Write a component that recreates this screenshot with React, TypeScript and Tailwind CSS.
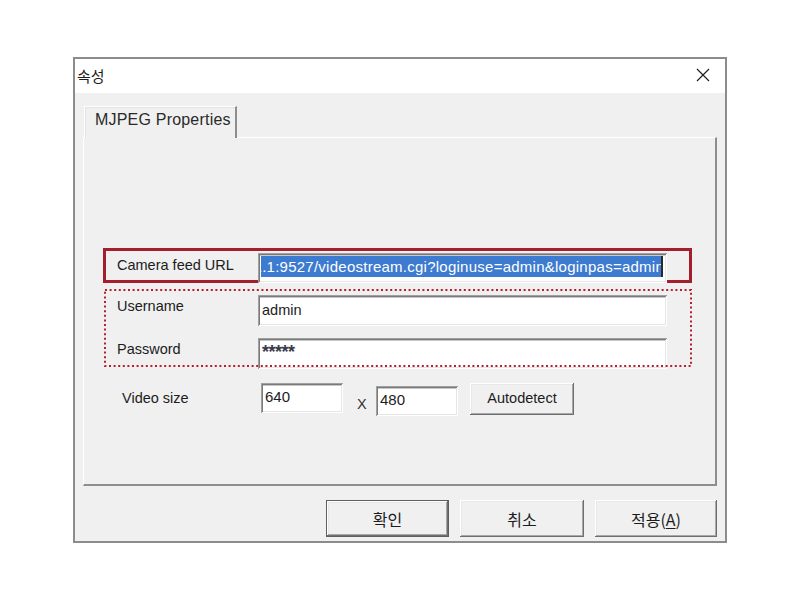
const ui = { fontFamily: '"Liberation Sans", "Noto Sans CJK KR", sans-serif' };
const kr = { fontFamily: '"Noto Sans CJK KR", "Liberation Sans", sans-serif' };

// sunken 3d edit box
const editBox =
  "bg-white shadow-[inset_1px_1px_#a0a0a0,inset_-1px_-1px_#ffffff,inset_2px_2px_#7a7a7a,inset_-2px_-2px_#e6e6e6,inset_0_3px_#c8c8c8]";
// raised push button
const pushBtn =
  "bg-[#f0f0f0] shadow-[inset_-1px_-1px_#6e6e6e,inset_1px_1px_#ffffff,inset_-2px_-2px_#a8a8a8,inset_2px_2px_#e8e8e8]";

function CloseIcon() {
  return (
    <svg width="14" height="14" viewBox="0 0 14 14">
      <path d="M1 1 L13 13 M13 1 L1 13" stroke="#1e1e1e" strokeWidth="1.2" />
    </svg>
  );
}

function DottedFrame({ w, h }: { w: number; h: number }) {
  return (
    <svg className="pointer-events-none absolute left-0 top-0" width={w} height={h}>
      <rect
        x="1"
        y="1"
        width={w - 2}
        height={h - 2}
        fill="none"
        stroke="#b4202e"
        strokeWidth="2"
        strokeDasharray="2 2.6"
      />
    </svg>
  );
}

export default function App() {
  return (
    <div className="min-h-screen w-full bg-white pl-[73px] pt-[57px] text-[#1c1c1c]" style={ui}>
      <div className="flex h-[486px] w-[654px] flex-col border-2 border-[#8c8c8c] bg-[#f0f0f0]">
        {/* title bar */}
        <div className="flex h-[34px] items-center justify-between bg-white pb-[2px] pl-[2px] pr-[15px]">
          <span className="text-[15px] leading-none" style={kr}>
            속성
          </span>
          <CloseIcon />
        </div>

        <div className="flex flex-1 flex-col px-[8px] pt-[13px]">
          {/* tab */}
          <div className="relative z-10 -mb-px ml-px flex h-[32px] w-[153px] items-start border-l border-t border-r-2 border-l-[#ffffff] border-t-[#ffffff] border-r-[#8e8e8e] bg-[#f0f0f0] pl-[10px] pt-[4px] shadow-[inset_1px_1px_#e3e3e3]">
            <span className="text-[16px] leading-[18px] tracking-[0.2px] text-[#2a2a2a]">MJPEG Properties</span>
          </div>

          {/* tab page */}
          <div className="flex h-[349px] w-[634px] flex-col border-l border-t border-b-2 border-r-2 border-l-[#ffffff] border-t-[#ffffff] border-b-[#8e8e8e] border-r-[#8e8e8e]">
            {/* camera feed url */}
            <div className="ml-[19px] mt-[110px] flex h-[35px] w-[589px] items-start border-[3px] border-[#a41e2d]">
              <span className="w-[152px] shrink-0 pl-[11px] pt-[6px] text-[14.5px] leading-4">
                Camera feed URL
              </span>
              <div className={`${editBox} mt-[2px] flex h-[30px] w-[409px] items-start overflow-hidden pl-[3px] pr-[4px] pt-[3px]`}>
                <div className="flex flex-1 justify-end overflow-hidden">
                  <span className="-mr-[4px] whitespace-nowrap bg-[#3c7bd0] px-px text-[15px] leading-[21px] tracking-[0.25px] text-white">
                    1.1:9527/videostream.cgi?loginuse=admin&amp;loginpas=admin
                  </span>
                  <span className="relative z-10 h-[21px] w-[2px] shrink-0 bg-[#2a2a2a]" />
                </div>
              </div>
            </div>

            {/* login block */}
            <div className="relative ml-[20px] mt-[6px] flex h-[78px] w-[588px] flex-col gap-[12px] pt-[6px]">
              <div className="flex items-start">
                <span className="w-[154px] shrink-0 pl-[13px] pt-[3px] text-[14.5px] leading-4">Username</span>
                <div className={`${editBox} flex h-[31px] w-[409px] items-center px-[4px] text-[14.5px]`}>admin</div>
              </div>
              <div className="flex items-start">
                <span className="w-[154px] shrink-0 pl-[13px] pt-[3px] text-[14.5px] leading-4">Password</span>
                <div className={`${editBox} flex h-[31px] w-[409px] items-start px-[4px] pt-[4px] text-[18px] font-bold leading-5 tracking-[-0.5px] text-[#3a3a4a]`}>
                  *****
                </div>
              </div>
              <DottedFrame w={588} h={78} />
            </div>

            {/* video size */}
            <div className="ml-[38px] mt-[16px] flex items-start">
              <span className="w-[139px] shrink-0 pt-[7px] text-[14.5px] leading-4">Video size</span>
              <div className={`${editBox} flex h-[30px] w-[82px] items-start px-[4px] pt-[4px] text-[15px] leading-5`}>640</div>
              <span className="ml-[14px] w-[19px] pt-[13px] text-[14.5px] leading-4 text-[#333]">X</span>
              <div className={`${editBox} mt-[3px] flex h-[30px] w-[82px] items-start px-[4px] pt-[4px] text-[15px] leading-5`}>480</div>
              <button className={`${pushBtn} ml-[12px] flex h-[32px] w-[104px] items-center justify-center text-[14.5px]`}>
                Autodetect
              </button>
            </div>
          </div>

          {/* dialog buttons */}
          <div className="mt-[14px] flex justify-end gap-[11px] text-[16px]" style={kr}>
            <button className={`${pushBtn} flex h-[37px] w-[123px] items-center justify-center border border-[#5e5e5e]`}>
              확인
            </button>
            <button className={`${pushBtn} flex h-[37px] w-[124px] items-center justify-center`}>취소</button>
            <button className={`${pushBtn} flex h-[37px] w-[122px] items-center justify-center`}>
              적용(<span className="underline underline-offset-2">A</span>)
            </button>
          </div>
        </div>
      </div>
    </div>
  );
}
